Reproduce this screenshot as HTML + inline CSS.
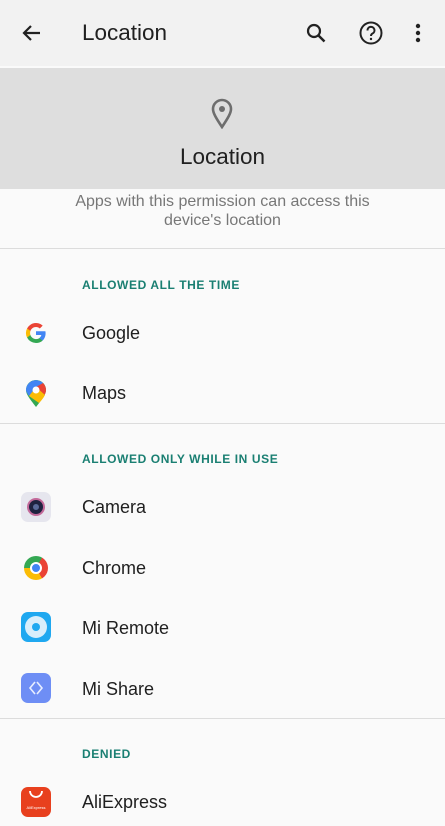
<!DOCTYPE html>
<html><head><meta charset="utf-8"><style>
*{margin:0;padding:0;box-sizing:border-box}
body{width:445px;height:826px;overflow:hidden;background:#fafafa;font-family:"Liberation Sans",Roboto,sans-serif;position:relative;color:#202020}
.a{position:absolute}
.bar{left:0;top:0;width:445px;height:66px;background:#f2f2f2}
.band{left:0;top:68px;width:445px;height:121px;background:#dedede}
.hr{left:0;width:445px;height:1px;background:#dcdcdc}
.hd{left:82px;font-size:12px;font-weight:bold;color:#1a7f72;letter-spacing:0.6px}
.it{left:82px;font-size:18px;color:#202020}
.ic{left:21px;width:30px;height:30px;border-radius:7px}
</style></head><body>
<div class="a bar"></div>
<svg class="a" style="left:20px;top:21px" width="24" height="24" viewBox="0 0 24 24"><path d="M20 12H5M11 5l-7 7 7 7" stroke="#222" stroke-width="2.2" fill="none"/></svg>
<div class="a" style="left:82px;top:20px;font-size:22.5px;color:#202020">Location</div>
<svg class="a" style="left:304px;top:21px" width="24" height="24" viewBox="0 0 24 24"><circle cx="10" cy="10" r="6" stroke="#222" stroke-width="2.2" fill="none"/><path d="M14.5 14.5l6 6" stroke="#222" stroke-width="2.5"/></svg>
<svg class="a" style="left:358px;top:20px" width="26" height="26" viewBox="0 0 26 26"><circle cx="13" cy="13" r="10.5" stroke="#222" stroke-width="2" fill="none"/><path d="M9.5 10.5a3.5 3.5 0 1 1 5 3c-1.2.6-1.5 1.2-1.5 2.5" stroke="#222" stroke-width="2" fill="none"/><circle cx="13" cy="19" r="1.2" fill="#222"/></svg>
<svg class="a" style="left:412px;top:22px" width="12" height="22" viewBox="0 0 12 22"><circle cx="6" cy="4" r="2.2" fill="#222"/><circle cx="6" cy="11" r="2.2" fill="#222"/><circle cx="6" cy="18" r="2.2" fill="#222"/></svg>
<div class="a band"></div>
<svg class="a" style="left:210px;top:97px" width="24" height="32" viewBox="0 0 24 32"><path d="M12 30C6 21 3 16 3 12a9 9 0 0 1 18 0c0 4-3 9-9 18z" stroke="#6e6e6e" stroke-width="2.6" fill="none"/><circle cx="12" cy="12" r="3" fill="#6e6e6e"/></svg>
<div class="a" style="left:0;width:445px;text-align:center;top:144px;font-size:22.5px;color:#202020">Location</div>
<div class="a" style="left:0;width:445px;text-align:center;top:192px;font-size:16px;line-height:19px;color:#777">Apps with this permission can access this<br>device's location</div>
<div class="a hr" style="top:248px"></div>
<div class="a hd" style="top:278px">ALLOWED ALL THE TIME</div>
<svg class="a" style="left:24px;top:321px" width="24" height="24" viewBox="0 0 24 24"><path d="M21.6 12.2c0-.7-.1-1.4-.2-2H12v3.8h5.4a4.6 4.6 0 0 1-2 3v2.5h3.2c1.9-1.700 3-4.3 3-7.3z" fill="#4285f4"/><path d="M12 22c2.7 0 5-.9 6.6-2.4l-3.2-2.5c-.9.6-2 1-3.4 1-2.6 0-4.8-1.8-5.6-4.1H3.1v2.6A10 10 0 0 0 12 22z" fill="#34a853"/><path d="M6.4 14c-.2-.6-.3-1.3-.3-2s.1-1.4.3-2V7.4H3.1a10 10 0 0 0 0 9.2z" fill="#fbbc05"/><path d="M12 6c1.5 0 2.8.5 3.8 1.5l2.9-2.9A10 10 0 0 0 3.1 7.4L6.4 10C7.2 7.7 9.4 6 12 6z" fill="#ea4335"/></svg>
<div class="a it" style="top:323px">Google</div>
<svg class="a" style="left:25px;top:380px" width="22" height="28" viewBox="0 0 22 28"><path d="M11 27C4 18 1 14 1 10a10 10 0 0 1 20 0c0 4-3 8-10 17z" fill="#34a853"/><path d="M1 10a10 10 0 0 1 17-7L4 16C2 13 1 11.5 1 10z" fill="#4285f4"/><path d="M18 3a10 10 0 0 1 3 7c0 1.5-.5 3-1.5 5L11 7z" fill="#ea4335"/><path d="M4 16l7-9 9 8c-1 2-3 5-6 8z" fill="#fbbc05"/><circle cx="11" cy="10" r="3.5" fill="#fff"/></svg>
<div class="a it" style="top:383px">Maps</div>
<div class="a hr" style="top:423px"></div>
<div class="a hd" style="top:452px">ALLOWED ONLY WHILE IN USE</div>
<div class="a ic" style="top:492px;background:#e6e6ee"></div>
<div class="a" style="left:27px;top:498px;width:18px;height:18px;border-radius:50%;background:#1e2240;border:2px solid #c36a9a"></div>
<div class="a" style="left:33px;top:504px;width:6px;height:6px;border-radius:50%;background:#5a6a9a"></div>
<div class="a it" style="top:497px">Camera</div>
<div class="a" style="left:24px;top:556px;width:24px;height:24px;border-radius:50%;background:conic-gradient(from 30deg,#ea4335 0 120deg,#fbbc05 120deg 240deg,#34a853 240deg 360deg)"></div>
<div class="a" style="left:30px;top:562px;width:12px;height:12px;border-radius:50%;background:#4285f4;border:2px solid #fff"></div>
<div class="a it" style="top:558px">Chrome</div>
<div class="a ic" style="top:612px;background:#1fa8f0"></div>
<div class="a" style="left:25px;top:616px;width:22px;height:22px;border-radius:50%;background:#d8eefb"></div>
<div class="a" style="left:32px;top:623px;width:8px;height:8px;border-radius:50%;background:#1fa8f0"></div>
<div class="a it" style="top:618px">Mi Remote</div>
<div class="a ic" style="top:673px;background:#6e8ef5"></div>
<svg class="a" style="left:28px;top:680px" width="16" height="16" viewBox="0 0 16 16"><path d="M7 2L2 8l5 6M9 2l5 6-5 6" stroke="#e8eeff" stroke-width="1.6" fill="none"/></svg>
<div class="a it" style="top:679px">Mi Share</div>
<div class="a hr" style="top:718px"></div>
<div class="a hd" style="top:747px">DENIED</div>
<div class="a ic" style="top:787px;background:#e8401e"></div>
<svg class="a" style="left:28px;top:790px" width="16" height="10" viewBox="0 0 16 10"><path d="M2 1a6 6 0 0 0 12 0" stroke="#fff" stroke-width="1.8" fill="none"/></svg>
<div class="a" style="left:21px;top:805px;width:30px;text-align:center;font-size:4px;color:#fff">AliExpress</div>
<div class="a it" style="top:792px">AliExpress</div>
</body></html>
